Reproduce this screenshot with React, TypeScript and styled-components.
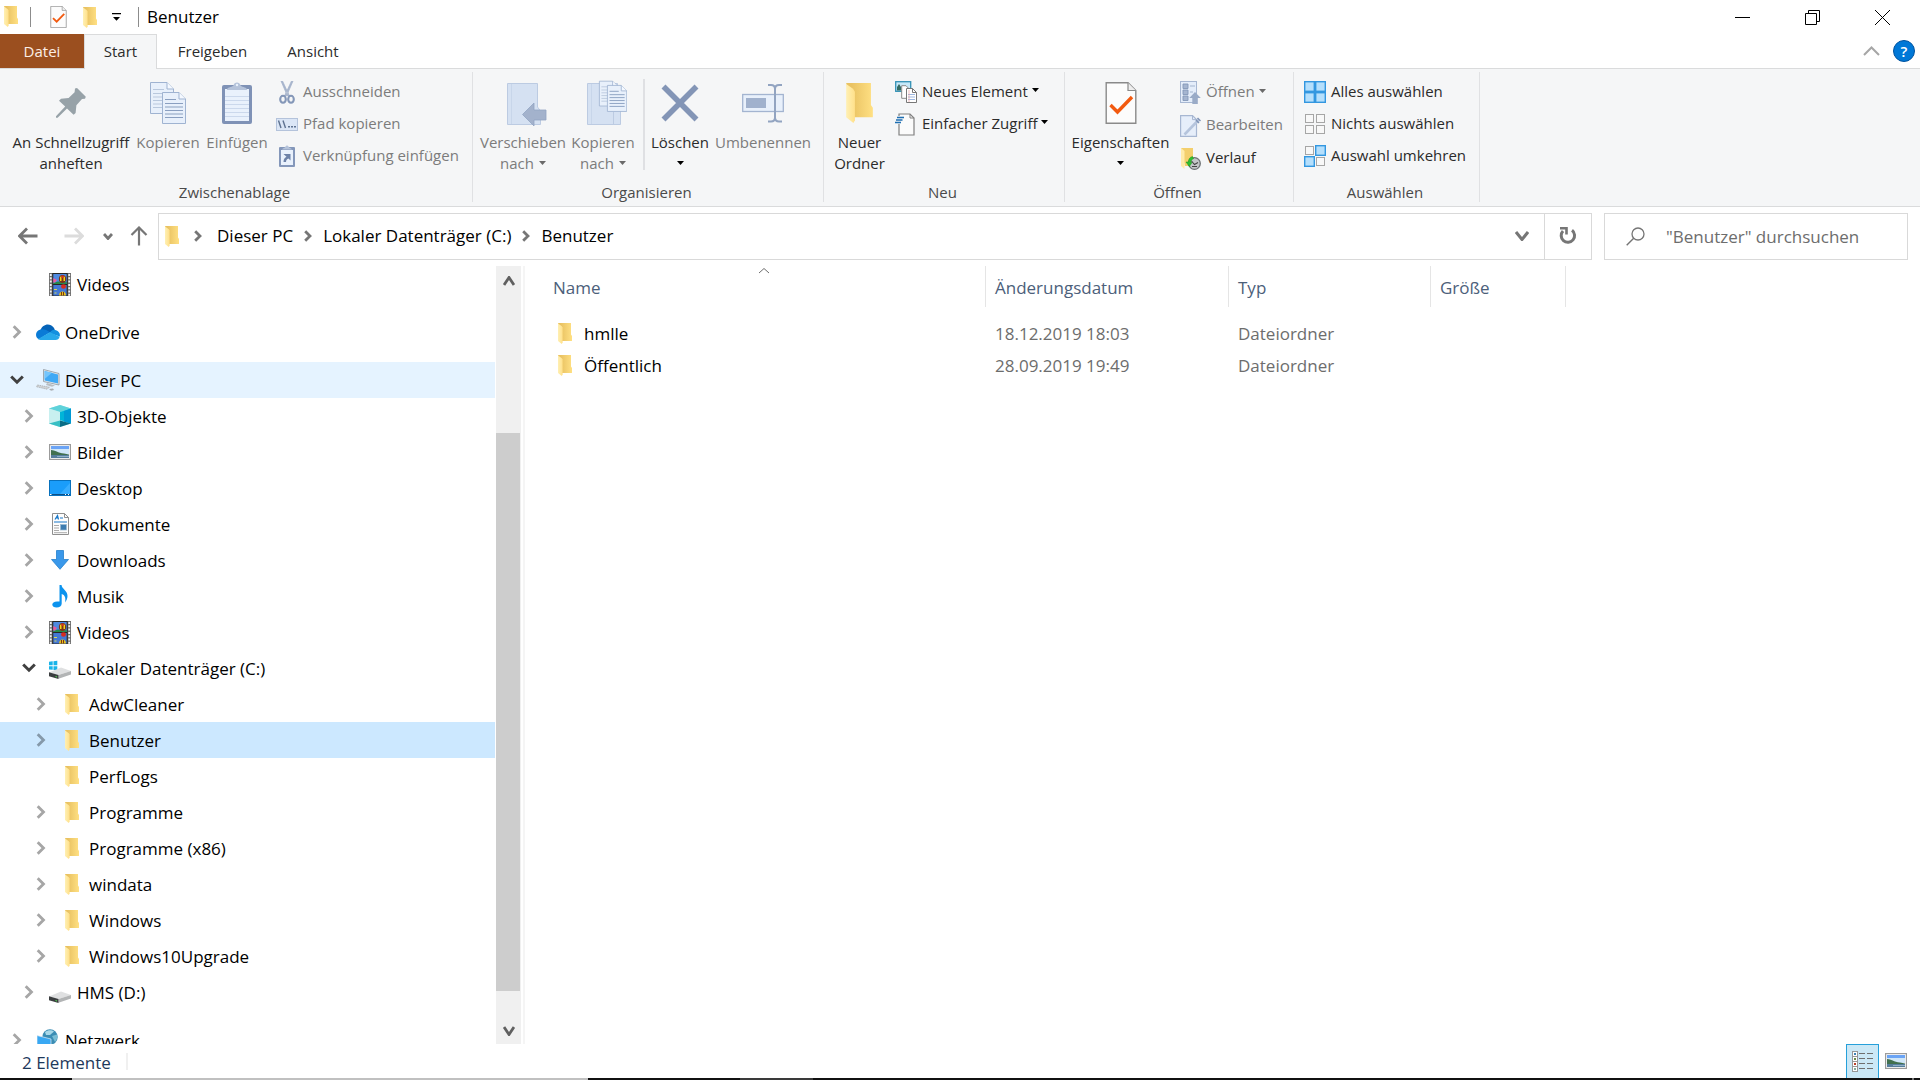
import React from 'react';
import styled, { createGlobalStyle } from 'styled-components';

const Global = createGlobalStyle`
  *, *::before, *::after { box-sizing: border-box; }
  body { margin: 0; background: #fff; }
  body, button, input, table {
    font-family: 'Open Sans', 'Noto Sans', 'Liberation Sans', sans-serif;
  }
  button { border: 0; padding: 0; margin: 0; background: none; color: inherit; font-size: inherit; line-height: inherit; }
  a { color: inherit; text-decoration: none; }
  svg { display: block; flex: none; }
`;

const Window = styled.div`
  display: flex;
  flex-direction: column;
  height: 100vh;
  color: #000;
  font-size: 17px;
  line-height: 24px;
`;

/* ---------- title bar ---------- */
const TitleBar = styled.header`
  display: flex;
  align-items: center;
  height: 34px;
  flex: none;
  padding-right: 3px;
`;
const QuickAccess = styled.div`
  display: flex;
  align-items: center;
  height: 34px;
`;
const QuickButton = styled.button<{ $w: number }>`
  display: flex;
  align-items: center;
  justify-content: center;
  width: ${(p) => p.$w}px;
  height: 34px;
`;
const SystemButton = styled(QuickButton)`
  justify-content: flex-start;
  padding: 0 0 2px 4px;
`;
const Rule = styled.span`
  width: 1px;
  height: 20px;
  background: #8c8c8c;
`;
const Title = styled.h1`
  margin: 0 0 0 8px;
  flex: 1;
  font-size: 17px;
  font-weight: 400;
  line-height: 34px;
`;
const WindowButton = styled.button`
  display: flex;
  align-items: center;
  justify-content: center;
  width: 70px;
  height: 34px;
`;

/* ---------- ribbon tabs ---------- */
const TabBar = styled.nav`
  display: flex;
  flex: none;
  height: 35px;
  border-bottom: 1px solid #dadbdc;
  font-size: 15px;
  color: #2b2b2b;
`;
const FileTab = styled.button`
  width: 84px;
  height: 34px;
  padding-bottom: 1px;
  background: #9b4f1f;
  color: #fbeee6;
`;
const Tab = styled.button<{ $w: number; $active?: boolean }>`
  width: ${(p) => p.$w}px;
  height: 35px;
  padding-bottom: 3px;
  border: 1px solid ${(p) => (p.$active ? '#dadbdc' : 'transparent')};
  border-bottom: 0;
  background: ${(p) => (p.$active ? '#f5f6f7' : 'transparent')};
`;
const TabTools = styled.div`
  display: flex;
  align-items: center;
  gap: 13px;
  margin-left: auto;
  padding-right: 5px;
`;
const HelpButton = styled.button`
  width: 22px;
  height: 22px;
  border: 1px solid #00539f;
  border-radius: 50%;
  background: #0078d7;
  color: #fff;
  font-size: 15px;
  font-weight: 600;
  line-height: 20px;
`;

/* ---------- ribbon ---------- */
const Ribbon = styled.div`
  display: flex;
  flex: none;
  height: 138px;
  padding: 3px 0 4px;
  background: #f5f6f7;
  border-bottom: 1px solid #dadbdc;
  font-size: 15px;
  line-height: 21px;
  color: #2b2b2b;
`;
const Group = styled.section<{ $w: number }>`
  display: flex;
  flex-direction: column;
  flex: none;
  width: ${(p) => p.$w}px;
  border-right: 1px solid #e0e1e3;
`;
const GroupBody = styled.div<{ $pad: number }>`
  display: flex;
  flex: 1;
  padding-left: ${(p) => p.$pad}px;
`;
const GroupName = styled.h2`
  margin: 0 0 -1px;
  padding-right: 3px;
  font-size: 15px;
  font-weight: 400;
  line-height: 21px;
  text-align: center;
  color: #4a4a4a;
`;
const BigButton = styled.button<{ $w: number }>`
  display: flex;
  flex-direction: column;
  align-items: center;
  width: ${(p) => p.$w}px;
  height: 104px;
  padding-top: 10px;
  white-space: nowrap;
  &:disabled { color: #7c7c7c; }
`;
const BigIcon = styled.span`
  display: flex;
  align-items: center;
  justify-content: center;
  height: 42px;
  margin-bottom: 8px;
`;
const Line = styled.span`
  display: flex;
  align-items: center;
  justify-content: center;
  gap: 5px;
  height: 21px;
`;
const SmallColumn = styled.div`
  display: flex;
  flex-direction: column;
  padding: 4px 0 0 4px;
`;
const SmallButton = styled.button<{ $h?: number }>`
  display: flex;
  align-items: center;
  gap: 5px;
  height: ${(p) => p.$h ?? 32}px;
  white-space: nowrap;
  &:disabled { color: #7c7c7c; }
`;
const SmallIcon = styled.span`
  display: flex;
  justify-content: center;
  width: 22px;
`;
const SmallLabel = styled.span`
  display: flex;
  align-items: center;
  gap: 4px;
  padding-bottom: 2px;
`;
const MenuMark = styled.span`
  padding-bottom: 2px;
`;
const Divider = styled.span`
  width: 2px;
  height: 91px;
  margin: 7px 5px 0 8px;
  background: #dfe0e3;
`;

/* ---------- address row ---------- */
const AddressRow = styled.div`
  display: flex;
  align-items: center;
  flex: none;
  height: 59px;
  padding: 0 12px 1px 5px;
`;
const NavButton = styled.button<{ $w: number }>`
  display: flex;
  align-items: center;
  justify-content: center;
  width: ${(p) => p.$w}px;
  height: 46px;
`;
const AddressBox = styled.div`
  display: flex;
  align-items: center;
  flex: 1;
  height: 47px;
  border: 1px solid #d9d9d9;
  padding-left: 6px;
`;
const Crumbs = styled.nav`
  display: flex;
  align-items: center;
  flex: 1;
`;
const CrumbMark = styled.span<{ $first?: boolean }>`
  display: flex;
  justify-content: center;
  width: ${(p) => (p.$first ? 38 : 30)}px;
`;
const AddressButton = styled.button<{ $w: number; $line?: boolean }>`
  display: flex;
  align-items: center;
  justify-content: center;
  width: ${(p) => p.$w}px;
  height: 45px;
  border-left: ${(p) => (p.$line ? '1px solid #d9d9d9' : '0')};
`;
const SearchBox = styled.label`
  display: flex;
  align-items: center;
  gap: 21px;
  width: 304px;
  height: 47px;
  margin-left: 12px;
  padding-left: 21px;
  border: 1px solid #d9d9d9;
`;
const SearchInput = styled.input`
  flex: 1;
  min-width: 0;
  padding: 2px 0 0;
  border: 0;
  outline: 0;
  font-size: 17px;
  line-height: 24px;
  &::placeholder { color: #6d6d6d; opacity: 1; }
`;

/* ---------- panes ---------- */
const Panes = styled.main`
  display: flex;
  flex: 1;
  min-height: 0;
`;
const Sidebar = styled.aside`
  display: flex;
  flex: none;
  width: 525px;
  border-right: 2px solid #f5f5f5;
`;
const Tree = styled.ul`
  flex: 1;
  min-width: 0;
  margin: 0;
  padding: 0;
  overflow: hidden;
  list-style: none;
`;
const TreeRow = styled.li<{ $level: number; $bg?: string; $gap?: boolean }>`
  display: flex;
  align-items: center;
  height: 36px;
  margin-top: ${(p) => (p.$gap ? 12 : 0)}px;
  padding-left: ${(p) => p.$level * 12}px;
  background: ${(p) => p.$bg ?? 'transparent'};
`;
const Toggle = styled.button`
  display: flex;
  align-items: center;
  justify-content: center;
  width: 34px;
  height: 36px;
`;
const ToggleGap = styled.span`
  width: 34px;
`;
const TreeLink = styled.a`
  display: flex;
  align-items: center;
  gap: 3px;
  white-space: nowrap;
`;
const TreeIcon = styled.span`
  display: flex;
  justify-content: center;
  width: 28px;
`;
const ItemName = styled.span`
  padding-top: 2px;
`;
const ScrollBar = styled.div`
  display: flex;
  flex-direction: column;
  width: 25px;
  margin: 0 2px 0 1px;
  background: #f0f0f0;
`;
const ScrollArrow = styled.button<{ $h: number }>`
  display: flex;
  align-items: center;
  justify-content: center;
  height: ${(p) => p.$h}px;
`;
const Track = styled.div<{ $part: number }>`
  flex: ${(p) => p.$part} 0 0;
`;
const Thumb = styled.div`
  flex: 558 0 0;
  margin-right: 1px;
  background: #cdcdcd;
`;

/* ---------- file list ---------- */
const Files = styled.section`
  flex: 1;
  min-width: 0;
`;
const FileTable = styled.table`
  width: 1041px;
  table-layout: fixed;
  border-collapse: separate;
  border-spacing: 0;
  color: #6d6d6d;
  tbody::before { content: ''; display: block; height: 10px; }
`;
const Head = styled.th<{ $w: number; $pad: number }>`
  position: relative;
  width: ${(p) => p.$w}px;
  height: 41px;
  padding: 2px 0 0 ${(p) => p.$pad}px;
  border-right: 1px solid #e5e5e5;
  text-align: left;
  font-weight: 400;
  color: #4c607a;
`;
const SortMark = styled.span`
  position: absolute;
  top: 1px;
  left: 233px;
`;
const Cell = styled.td`
  height: 32px;
  padding: 2px 0 0 9px;
`;
const NameCell = styled(Cell)`
  padding: 0 0 0 33px;
  color: #000;
`;
const FileLink = styled.a`
  display: flex;
  align-items: center;
  gap: 12px;
`;

/* ---------- status ---------- */
const StatusBar = styled.footer`
  display: flex;
  align-items: center;
  flex: none;
  height: 34px;
  color: #1e395b;
`;
const StatusText = styled.span`
  padding: 4px 15px 0 22px;
`;
const StatusRule = styled.span`
  width: 2px;
  height: 17px;
  margin-right: auto;
  background: #f0f0f0;
`;
const ViewButton = styled.button<{ $on?: boolean }>`
  display: flex;
  align-items: center;
  justify-content: center;
  width: 33px;
  height: 34px;
  border: ${(p) => (p.$on ? '1px solid #26a0da' : '0')};
  border-bottom: 0;
  background: ${(p) => (p.$on ? '#cbe8f6' : 'transparent')};
`;
const ViewButtons = styled.div`
  display: flex;
  padding-right: 8px;
`;
const TaskEdge = styled.div`
  display: flex;
  flex: none;
  height: 2px;
  background: #111;
`;
const EdgePart = styled.span<{ $w: number; $c: string }>`
  width: ${(p) => p.$w}px;
  background: ${(p) => p.$c};
`;
const EdgeEnd = styled(EdgePart)`
  margin: 0 6px 0 auto;
`;

/* ---------- icons ---------- */
const Folder = ({ w = 14, h = 21 }: { w?: number; h?: number }) => (
  <svg width={w} height={h} viewBox="0 0 14 21">
    <defs>
      <linearGradient id="fb" x1="0" x2="1">
        <stop offset="0.2" stopColor="#e9c262" />
        <stop offset="1" stopColor="#ffe083" />
      </linearGradient>
      <linearGradient id="ff" x1="0" x2="1">
        <stop offset="0" stopColor="#fff0b4" />
        <stop offset="1" stopColor="#ffe08a" />
      </linearGradient>
    </defs>
    <path d="M0 0H13V11.5L14 13V18H4Z" fill="url(#fb)" />
    <path d="M0 0.5L3.6 3L4.6 4.6V19.5L3.8 21L0 18Z" fill="url(#ff)" />
  </svg>
);

const Chevron = ({ open, color = '#a6a6a6' }: { open?: boolean; color?: string }) =>
  open ? (
    <svg width="14" height="10" viewBox="0 0 14 10">
      <path d="M1.2 1.5L7 7.2L12.8 1.5" fill="none" stroke={color} strokeWidth="3" />
    </svg>
  ) : (
    <svg width="10" height="14" viewBox="0 0 10 14">
      <path d="M1.7 1.2L7.5 7L1.7 12.8" fill="none" stroke={color} strokeWidth="2.8" />
    </svg>
  );

const CrumbChevron = () => (
  <svg width="8" height="12" viewBox="0 0 8 12">
    <path d="M1.2 1.2L6 6L1.2 10.8" fill="none" stroke="#767676" strokeWidth="2.8" />
  </svg>
);

const Caret = ({ color = '#000' }: { color?: string }) => (
  <svg width="7" height="4" viewBox="0 0 7 4">
    <path d="M0 0H7L3.5 4Z" fill={color} />
  </svg>
);

const CheckPage = ({ w, h }: { w: number; h: number }) => (
  <svg width={w} height={h} viewBox="0 0 31 42">
    <path d="M0.7 0.7H22.5L30.3 8.5V41.3H0.7Z" fill="#fcfcfc" stroke="#8a8a8a" strokeWidth="1.4" />
    <path d="M22.5 0.7V8.5H30.3" fill="#eee" stroke="#8a8a8a" strokeWidth="1.2" />
    <path d="M5 23L12 30L26.5 15" fill="none" stroke="#f25a10" strokeWidth="3.4" />
  </svg>
);

const Pin = () => (
  <svg width="30" height="30" viewBox="0 0 30 30">
    <path
      d="M19 0.6L21 0L29.8 8.8L29 10.8L26 11L20.4 17.2L19.6 25L17.6 26.8L11 20.4L1.6 29.8H0V28.2L9.2 18.6L3 12.8L5 10.8L12.6 10L18.6 4.2Z"
      fill="#97a2a8"
    />
  </svg>
);

const PageLines = ({ x, y, light }: { x: number; y: number; light?: boolean }) => {
  const c = light ? '#b9c8dd' : '#8a9fc0';
  return (
    <g transform={`translate(${x} ${y})`}>
      <path d="M0.5 0.5H17L23.5 7V31.5H0.5Z" fill="#e8f0fb" stroke="#9fb3d1" />
      <path d="M17 0.5V7H23.5" fill="#f5f9ff" stroke="#9fb3d1" />
      <path d="M3 7.5H14M3 11.5H21M3 15H21M3 18.5H21M3 22H21M3 25.5H21" stroke={c} strokeWidth="1.1" />
    </g>
  );
};

const CopyIcon = () => (
  <svg width="36" height="42" viewBox="0 0 36 42">
    <PageLines x={0} y={0} light />
    <PageLines x={12} y={10} />
  </svg>
);

const PasteIcon = () => (
  <svg width="30" height="42" viewBox="0 0 30 42">
    <rect x="0" y="3" width="30" height="39" rx="2" fill="#7f92b6" />
    <rect x="3" y="7" width="24" height="32" fill="#e9f1fc" />
    <path d="M3 14.5H27M3 18.5H27M3 22.5H27M3 26.5H27M3 30.5H27M3 34.5H27" stroke="#cbd8ec" />
    <path d="M5 8C5 5 9 5.500 11.500 3.500C12 -0.500 18 -0.500 18.500 3.500C21 5.500 25 5 25 8Z" fill="#b5c3da" />
    <circle cx="15" cy="3" r="1.2" fill="#e9f1fc" />
  </svg>
);

const CutIcon = () => (
  <svg width="16" height="23" viewBox="0 0 16 23">
    <path d="M2 0L3.500 0L10.500 15L8.500 15Z M14 0L12.500 0L5.500 15L7.500 15Z" fill="#a6b4cc" stroke="#a6b4cc" strokeWidth="0.8" />
    <ellipse cx="4" cy="18.300" rx="2.8" ry="3.500" fill="none" stroke="#8497b8" strokeWidth="2.1" />
    <ellipse cx="12" cy="18.300" rx="2.8" ry="3.500" fill="none" stroke="#8497b8" strokeWidth="2.1" />
  </svg>
);

const PathIcon = () => (
  <svg width="22" height="13" viewBox="0 0 22 13">
    <rect x="0.5" y="0.5" width="21" height="12" fill="#dbe6f6" stroke="#b4c3db" />
    <path d="M2.500 2.500L5 10M7 2.500L9.500 10" stroke="#5f7391" strokeWidth="1.4" />
    <path d="M12 8.700H14M15 8.700H17M18 8.700H20" stroke="#5f7391" strokeWidth="1.5" />
  </svg>
);

const LinkPasteIcon = () => (
  <svg width="16" height="22" viewBox="0 0 16 22">
    <rect y="2" width="16" height="20" rx="1" fill="#8497ba" />
    <rect x="2" y="5" width="12" height="15" fill="#e9f1fc" />
    <path d="M3 4.500C4 3 6 3 6.500 1.500C7 0 9 0 9.500 1.500C10 3 12 3 13 4.500Z" fill="#b5c3da" />
    <path d="M4.500 9H11.500V15.500L9.500 13.500C8 14 7 15 7 17H4.500C4.500 14 6 12.500 7.500 11.800Z" fill="#6d82a8" />
  </svg>
);

const SheetBack = ({ w }: { w: number }) => (
  <>
    <path d={`M0.5 3.5H${w - 3.5}V27L${w - 0.5} 31V44.500H0.5Z`} fill="#d5e1f2" stroke="#bccbe2" />
    <path d="M4.500 4V44" stroke="#c8d6ea" />
  </>
);

const MoveIcon = () => (
  <svg width="40" height="46" viewBox="0 0 40 46">
    <SheetBack w={34} />
    <path d="M15.500 34.500L27 23V30H39V40H27V46Z" fill="#a3b2cc" stroke="#92a4c3" strokeWidth="0.8" />
  </svg>
);

const CopyToIcon = () => (
  <svg width="40" height="46" viewBox="0 0 40 46">
    <SheetBack w={34} />
    <path d="M26.500 32V44" stroke="#bccbe2" />
    <g transform="translate(12 0) scale(.8)">
      <PageLines x={0} y={1} light />
    </g>
    <g transform="translate(20 5) scale(.84)">
      <PageLines x={0} y={0} />
    </g>
  </svg>
);

const DeleteIcon = () => (
  <svg width="38" height="38" viewBox="0 0 38 38">
    <path d="M2.500 2.500L35.500 35.500M35.500 2.500L2.500 35.500" stroke="#8395b6" strokeWidth="5.600" />
  </svg>
);

const RenameIcon = () => (
  <svg width="42" height="40" viewBox="0 0 42 40">
    <rect x="0.700" y="11.500" width="40.600" height="17" fill="#e8f0fb" stroke="#a3b4d0" strokeWidth="1.300" />
    <rect x="4" y="15" width="20" height="10" fill="#a0b1cd" />
    <path d="M26 2H29C31.500 2 33 3.500 33 6C33 3.500 34.500 2 37 2H40M33 5V35M26 38.500H29C31.500 38.500 33 37 33 34.500C33 37 34.500 38.500 37 38.500H40" fill="none" stroke="#92a4c1" strokeWidth="2" />
  </svg>
);

const NewItemIcon = () => (
  <svg width="22" height="22" viewBox="0 0 22 22">
    <rect x="0.700" y="0.700" width="15" height="9.600" fill="#c6e8f8" stroke="#3391b5" strokeWidth="1.300" />
    <path d="M2 9.500V6L4 3L6 6V9.500Z" fill="#356b62" />
    <path d="M6.700 4.700H11L13.300 7V17.300H6.700Z" fill="#fff" stroke="#8a8a8a" />
    <path d="M11.500 7.500H17.500L21.500 11.500V21.500H11.500Z" fill="#fff" stroke="#777" />
    <path d="M17.500 7.500V11.500H21.500" fill="none" stroke="#777" />
    <path d="M13 13.500H20M13 16H20M13 18.500H20" stroke="#9cb7e0" />
    <path d="M14 9V21" stroke="#e9a0a0" strokeWidth="0.700" />
  </svg>
);

const EasyAccessIcon = () => (
  <svg width="22" height="23" viewBox="0 0 22 23">
    <path d="M4 1H15L19 5V22H4Z" fill="#fbfbfb" stroke="#808080" strokeWidth="1.200" />
    <path d="M15 1V5H19" fill="none" stroke="#808080" />
    <path d="M2 4.500H9M1 7H7.500M0 9.500H6" stroke="#f5f6f7" strokeWidth="3" />
    <path d="M2 4.500H9M1 7H7.500M0 9.500H6" stroke="#1f6fb2" strokeWidth="1.300" />
  </svg>
);

const OpenIcon = () => (
  <svg width="21" height="23" viewBox="0 0 21 23">
    <rect x="0.500" y="0.500" width="16" height="21" fill="#e4edfa" stroke="#a7b7d2" />
    <path d="M3 3H8V7.500H3ZM3 9H8V13.500H3ZM3 15H8V19.500H3Z" fill="#a5b5d0" stroke="#8497b8" strokeWidth="0.900" />
    <path d="M10 5H15M10 11H13" stroke="#b9c7dd" strokeWidth="1.300" />
    <path d="M15 11L20.800 17H17.800V23H12.300V17H9.300Z" fill="#9aabc7" />
  </svg>
);

const EditIcon = () => (
  <svg width="21" height="22" viewBox="0 0 21 22">
    <path d="M0.600 0.600H12.500L16.500 4.600V21.400H0.600Z" fill="#e6eefa" stroke="#a7b7d2" strokeWidth="1.200" />
    <path d="M12.500 0.600V4.600H16.500" fill="none" stroke="#a7b7d2" />
    <path d="M4.500 19.500L18.500 5" stroke="#b5c4dc" strokeWidth="2.600" />
    <path d="M16 5L19 8M17.500 3L20.500 6" stroke="#7f93b6" strokeWidth="1.500" />
  </svg>
);

const HistoryIcon = () => (
  <svg width="21" height="22" viewBox="0 0 21 22">
    <path d="M1 0H13V18H5Z" fill="#f3cf6d" />
    <path d="M1 0L4.500 3V21L1 18Z" fill="#ffebaa" />
    <circle cx="14.500" cy="15.500" r="5.800" fill="#c3c6c8" stroke="#6d7275" strokeWidth="1.300" />
    <path d="M11.500 13L14.500 16.500L18 14.500M12 18.500H17" fill="none" stroke="#444" strokeWidth="1.100" />
    <path d="M12.500 8.500C10 9 8.500 11 8.300 14H6L9.300 18.500L12 14.500H10.500C11 12.500 12 11.300 13.500 10.700Z" fill="#2fbf2f" stroke="#16911b" strokeWidth="0.500" />
  </svg>
);

type Tile = [number, number, boolean];
const Tiles = ({ on }: { on: boolean[] }) => {
  const tiles: Tile[] = [
    [0, 0, on[0]],
    [11, 0, on[1]],
    [0, 11, on[2]],
    [11, 11, on[3]],
  ];
  return (
    <svg width="22" height="22" viewBox="0 0 22 22">
      {tiles
        .slice()
        .sort((a, b) => Number(a[2]) - Number(b[2]))
        .map(([x, y, lit]) =>
          lit ? (
            <rect key={`${x}-${y}`} x={x + 0.7} y={y + 0.7} width="9.600" height="9.600" fill="#b5dffc" stroke="#3397e0" strokeWidth="1.400" />
          ) : (
            <rect key={`${x}-${y}`} x={x + 1.5} y={y + 1.5} width="8" height="8" fill="#f8f8f8" stroke="#a6a6a6" />
          ),
        )}
    </svg>
  );
};

const VideoIcon = () => (
  <svg width="22" height="23" viewBox="0 0 22 23">
    <rect width="22" height="23" fill="#6e6e6e" />
    <path d="M1.800 1V23M20.200 1V23" stroke="#f2f2f2" strokeWidth="1.800" strokeDasharray="2 1.300" />
    <rect x="3.300" width="15.400" height="23" fill="#262626" />
    <rect x="4.300" y="1" width="13.400" height="10" fill="#4f8ae0" />
    <rect x="4.300" y="12" width="13.400" height="10.500" fill="#4478d4" />
    <path d="M4.300 10L9 8.500L13 9.500L17.700 9V11H4.300Z" fill="#268a4a" />
    <path d="M4.300 5L8 7L6 9.500H4.300Z" fill="#ee5a9a" />
    <ellipse cx="13.500" cy="6" rx="3.600" ry="4" fill="#7d3415" />
    <path d="M11 4L12.500 3V8H11ZM14.500 3L16 4V8H14.500Z" fill="#f2d21c" />
    <path d="M12.500 2.500H14.500V5H12.500Z" fill="#d62c20" />
    <ellipse cx="14.500" cy="13.500" rx="2.500" ry="2.300" fill="#d62c20" />
    <path d="M10 22.500C10 17 17 17 17 22.500Z" fill="#e8c21a" />
    <path d="M12.500 22.500V19M14.500 22.500V19" stroke="#7d3415" />
    <path d="M5 16.500H8M5.500 20H7.500" stroke="#d9d957" />
  </svg>
);

const OneDriveIcon = () => (
  <svg width="24" height="16" viewBox="0 0 24 16">
    <path d="M4.500 6C6 1.500 11 -1 15 1.200C17 2.300 18.300 3.800 18.800 6L12 9.500Z" fill="#0563b8" />
    <path d="M4.500 5.500C8 4.500 10 5.700 14 8.300L3 15.300C-1.500 13.500 -0.800 6.500 4.500 5.500Z" fill="#0a7bd6" />
    <path d="M14 8.300C16 5.500 18.500 5.300 20 6.200C23 7 24.500 10 23.700 12.500L13 9Z" fill="#1490df" />
    <path d="M14 8.200L23.600 12.700C23 15 21.500 16 19.500 16H5.500C4 16 3 15.600 2 14.900Z" fill="#28a8ea" />
  </svg>
);

const PcIcon = () => (
  <svg width="24" height="22" viewBox="0 0 24 22">
    <path d="M7.500 0.500L23 4.500V16L7.500 12.500Z" fill="#e8eaec" stroke="#8d969c" strokeWidth="0.800" />
    <path d="M8.600 1.900L22 5.400V14.500L8.600 11.500Z" fill="#3fa9f5" />
    <path d="M8.600 1.900L16 3.800L8.600 10Z" fill="#74c5fb" />
    <path d="M11 14L19 16.500L16 17.800L10 16Z" fill="#b9bec2" />
    <path d="M1.500 16L13.500 18.200L11 20.200L0 17.600Z" fill="#d0d3d6" stroke="#a1a5a8" strokeWidth="0.700" strokeDasharray="1.500 0.700" />
    <path d="M13 20L17 19.500L18 21L15 21.700Z" fill="#a8acb0" />
  </svg>
);

const CubeIcon = () => (
  <svg width="22" height="22" viewBox="0 0 22 22">
    <path d="M0 3.500L11 0L22 3.500V18.500L11 22L0 18.500Z" fill="#9de4e8" />
    <path d="M0 3.500L11 0L22 3.500L11 7Z" fill="#5fd2da" />
    <path d="M0 3.500L11 7V17L0 18.500Z" fill="#c8f0f0" />
    <path d="M11 7L22 3.500V18.500L11 15Z" fill="#00b4d8" />
    <path d="M15 6L22 3.500V18.500L15 16.500Z" fill="#0099d4" />
    <path d="M0 18.500L11 15.500V22Z" fill="#38bfc4" />
    <path d="M22 18.500L11 15.500V22Z" fill="#0b6d86" />
  </svg>
);

const PictureIcon = () => (
  <svg width="22" height="16" viewBox="0 0 22 16">
    <rect x="0.600" y="0.600" width="20.800" height="14.800" fill="#fff" stroke="#9b9b9b" strokeWidth="1.200" />
    <rect x="2" y="2" width="18" height="4" fill="#6ba4f5" />
    <rect x="2" y="5" width="18" height="5" fill="#cfe6f8" />
    <path d="M2 6C6 6 9 9 15 9.500L20 10.500V11H2Z" fill="#41704f" />
    <rect x="2" y="11" width="18" height="3" fill="#557d9c" />
    <path d="M8 12.500H20" stroke="#8fb0c6" />
  </svg>
);

const DesktopIcon = () => (
  <svg width="22" height="16" viewBox="0 0 22 16">
    <rect x="0.500" y="0.500" width="21" height="15" fill="#1a9dfa" stroke="#0871bd" />
    <path d="M11 14L21 3V14Z" fill="#38adff" />
    <path d="M1 14.500H21" stroke="#0d4f86" />
    <path d="M1 14.500H2.500M16 14.500H17M19 14.500H20" stroke="#fff" />
  </svg>
);

const DocIcon = () => (
  <svg width="17" height="22" viewBox="0 0 17 22">
    <path d="M0.500 0.500H12.500L16.500 4.500V21.500H0.500Z" fill="#fdfdfd" stroke="#8f8f8f" />
    <path d="M12.500 0.500V4.500H16.500" fill="none" stroke="#8f8f8f" />
    <path d="M3 6.500L5.500 2.500L6.500 6.500M4.300 5H6M8 5H11M2 9H15" fill="none" stroke="#1979ca" strokeWidth="1.200" />
    <path d="M2 12.500H7M2 15H7M2 17.500H7M2 19.700H15" stroke="#aaa" />
    <rect x="8.500" y="11.500" width="6" height="5.500" fill="#3d7cb0" stroke="#9bb9d0" strokeWidth="0.700" />
  </svg>
);

const DownIcon = () => (
  <svg width="18" height="20" viewBox="0 0 18 20">
    <path d="M5.500 0.500H12.500V9.500H17.500L9 19.300L0.500 9.500H5.500Z" fill="#3a98ea" stroke="#2380cd" strokeWidth="0.800" />
  </svg>
);

const MusicIcon = () => (
  <svg width="16" height="23" viewBox="0 0 16 23">
    <path d="M7.500 0H9.500C10 4 15.500 5.500 15.500 11C15.500 13.500 14.500 15.500 13 17.500C14 13 13 10 9.700 9V18.500C9.700 21 7.500 22.600 4.600 22.600C2 22.600 0.300 21.300 0.300 19.500C0.300 17.300 2.800 15.800 7.500 16.600Z" fill="#0c93ee" />
  </svg>
);

const DriveIcon = ({ windows }: { windows?: boolean }) => (
  <svg width="22" height="26" viewBox="0 -2 22 26">
    {windows && <path d="M0 4.800L3.700 4.300V8.300H0ZM4.500 4.200L8.300 3.700V8.300H4.500ZM0 9.200H3.700V12.800L0 12.400ZM4.500 9.200H8.300V13.400L4.500 13Z" fill="#18b4e9" />}
    <path d="M0 15.500L12 10.500L22 14L9.500 18Z" fill="#dfe0e1" />
    <path d="M9.500 18L22 14V17.500L9.500 21.800Z" fill="#b2b4b5" />
    <path d="M0 15.300L9.500 18V21.900L0 19.300Z" fill="#3a3d3f" />
    <path d="M6.500 19.500L8 20" stroke="#55d355" strokeWidth="1.200" />
  </svg>
);

const NetworkIcon = () => (
  <svg width="22" height="22" viewBox="0 0 22 22">
    <circle cx="13" cy="8" r="7.700" fill="#3b8db4" />
    <path d="M8 3C11 0.500 15 0.800 17 2.500L13 6L9 6Z" fill="#a8d8e8" />
    <path d="M15 7L20 5.500C21 8 20 11 18 13Z" fill="#79bdd4" />
    <path d="M0 6.500L14 10V20L0 17.500Z" fill="#39a8f3" stroke="#e2edf3" strokeWidth="0.700" />
  </svg>
);

const DetailsIcon = () => (
  <svg width="21" height="21" viewBox="0 0 21 21">
    {[0, 5, 10, 15].map((y, i) => (
      <g key={y}>
        <rect x="0.500" y={y + 0.5} width="5" height="5" fill="#fff" stroke="#979797" />
        <rect x="2" y={y + 2} width="2" height="2" fill={['#3b83b5', '#6c8d4b', '#b8402a', '#7fae9c'][i]} />
        <path d={`M7 ${y + 2.5}H13M15 ${y + 2.5}H21`} stroke="#6f6f6f" />
      </g>
    ))}
  </svg>
);

const ArrowIcon = ({ dir, color }: { dir: 'left' | 'right' | 'up'; color: string }) => {
  const turn = { left: 0, right: 180, up: 90 }[dir];
  return (
    <svg width="20" height="20" viewBox="0 0 20 20">
      <path d="M19.500 10H2M9 2.500L1.500 10L9 17.500" transform={`rotate(${turn} 10 10)`} fill="none" stroke={color} strokeWidth={dir === 'up' ? 2.2 : 2.8} />
    </svg>
  );
};

const ThinChevron = ({ up, w, h, color, sw }: { up?: boolean; w: number; h: number; color: string; sw: number }) => (
  <svg width={w} height={h} viewBox={`0 0 ${w} ${h}`}>
    <path d={up ? `M1 ${h - 1}L${w / 2} 1.500L${w - 1} ${h - 1}` : `M1 1L${w / 2} ${h - 1.5}L${w - 1} 1`} fill="none" stroke={color} strokeWidth={sw} />
  </svg>
);

/* ---------- data ---------- */
type Node = { name: string; level: number; icon: React.ReactNode; state?: 'open' | 'closed'; gap?: boolean; bg?: string };
const tree: Node[] = [
  { name: 'Videos', level: 1, icon: <VideoIcon /> },
  { name: 'OneDrive', level: 0, icon: <OneDriveIcon />, state: 'closed', gap: true },
  { name: 'Dieser PC', level: 0, icon: <PcIcon />, state: 'open', gap: true, bg: '#e5f3ff' },
  { name: '3D-Objekte', level: 1, icon: <CubeIcon />, state: 'closed' },
  { name: 'Bilder', level: 1, icon: <PictureIcon />, state: 'closed' },
  { name: 'Desktop', level: 1, icon: <DesktopIcon />, state: 'closed' },
  { name: 'Dokumente', level: 1, icon: <DocIcon />, state: 'closed' },
  { name: 'Downloads', level: 1, icon: <DownIcon />, state: 'closed' },
  { name: 'Musik', level: 1, icon: <MusicIcon />, state: 'closed' },
  { name: 'Videos', level: 1, icon: <VideoIcon />, state: 'closed' },
  { name: 'Lokaler Datenträger (C:)', level: 1, icon: <DriveIcon windows />, state: 'open' },
  { name: 'AdwCleaner', level: 2, icon: <Folder />, state: 'closed' },
  { name: 'Benutzer', level: 2, icon: <Folder />, state: 'closed', bg: '#cce8ff' },
  { name: 'PerfLogs', level: 2, icon: <Folder /> },
  { name: 'Programme', level: 2, icon: <Folder />, state: 'closed' },
  { name: 'Programme (x86)', level: 2, icon: <Folder />, state: 'closed' },
  { name: 'windata', level: 2, icon: <Folder />, state: 'closed' },
  { name: 'Windows', level: 2, icon: <Folder />, state: 'closed' },
  { name: 'Windows10Upgrade', level: 2, icon: <Folder />, state: 'closed' },
  { name: 'HMS (D:)', level: 1, icon: <DriveIcon />, state: 'closed' },
  { name: 'Netzwerk', level: 0, icon: <NetworkIcon />, state: 'closed', gap: true },
];

const files = [
  { name: 'hmlle', date: '18.12.2019 18:03', type: 'Dateiordner' },
  { name: 'Öffentlich', date: '28.09.2019 19:49', type: 'Dateiordner' },
];

const crumbs = ['Dieser PC', 'Lokaler Datenträger (C:)', 'Benutzer'];

type BigProps = { w: number; icon: React.ReactNode; text: string; second?: string; menu?: boolean; off?: boolean };
const Big = ({ w, icon, text, second, menu, off }: BigProps) => (
  <BigButton $w={w} disabled={off}>
    <BigIcon>{icon}</BigIcon>
    <Line>{text}</Line>
    {(second || menu) && (
      <Line>
        {second}
        {menu && <MenuMark><Caret color={off ? '#6a6a6a' : '#000'} /></MenuMark>}
      </Line>
    )}
  </BigButton>
);

type SmallProps = { icon: React.ReactNode; text: string; menu?: boolean; off?: boolean; h?: number };
const Small = ({ icon, text, menu, off, h }: SmallProps) => (
  <SmallButton disabled={off} $h={h}>
    <SmallIcon>{icon}</SmallIcon>
    <SmallLabel>
      {text}
      {menu && <MenuMark><Caret color={off ? '#6a6a6a' : '#000'} /></MenuMark>}
    </SmallLabel>
  </SmallButton>
);

const RibbonGroup = ({ name, w, pad, children }: { name: string; w: number; pad: number; children: React.ReactNode }) => (
  <Group $w={w}>
    <GroupBody $pad={pad}>{children}</GroupBody>
    <GroupName>{name}</GroupName>
  </Group>
);

export default function App() {
  return (
    <>
      <Global />
      <Window>
        <TitleBar>
          <QuickAccess>
            <SystemButton $w={30} aria-label="Systemmenü"><Folder /></SystemButton>
            <Rule />
            <QuickButton $w={55} aria-label="Eigenschaften"><CheckPage w={17} h={22} /></QuickButton>
            <QuickButton $w={8} aria-label="Neuer Ordner"><Folder /></QuickButton>
            <QuickButton $w={44} aria-label="Symbolleiste anpassen">
              <svg width="9" height="8" viewBox="0 0 9 8">
                <path d="M0 0H9V1.200H0ZM1 4H8L4.500 7.800Z" fill="#000" />
              </svg>
            </QuickButton>
            <Rule />
          </QuickAccess>
          <Title>Benutzer</Title>
          <WindowButton aria-label="Minimieren">
            <svg width="15" height="15" viewBox="0 0 15 15"><path d="M0 7.500H15" stroke="#000" /></svg>
          </WindowButton>
          <WindowButton aria-label="Verkleinern">
            <svg width="15" height="15" viewBox="0 0 15 15">
              <path d="M0.500 3.500H11.500V14.500H0.500ZM3.500 3.500V0.500H14.500V11.500H11.500" fill="none" stroke="#000" />
            </svg>
          </WindowButton>
          <WindowButton aria-label="Schließen">
            <svg width="15" height="15" viewBox="0 0 15 15"><path d="M0 0L15 15M15 0L0 15" stroke="#000" /></svg>
          </WindowButton>
        </TitleBar>

        <TabBar>
          <FileTab>Datei</FileTab>
          <Tab $w={73} $active>Start</Tab>
          <Tab $w={111}>Freigeben</Tab>
          <Tab $w={90}>Ansicht</Tab>
          <TabTools>
            <button aria-label="Menüband minimieren"><ThinChevron up w={17} h={10} color="#a6a6a6" sw={2} /></button>
            <HelpButton aria-label="Hilfe">?</HelpButton>
          </TabTools>
        </TabBar>

        <Ribbon>
          <RibbonGroup name="Zwischenablage" w={473} pad={8}>
            <Big w={126} icon={<Pin />} text="An Schnellzugriff" second="anheften" />
            <Big w={68} icon={<CopyIcon />} text="Kopieren" off />
            <Big w={70} icon={<PasteIcon />} text="Einfügen" off />
            <SmallColumn>
              <Small icon={<CutIcon />} text="Ausschneiden" off />
              <Small icon={<PathIcon />} text="Pfad kopieren" off />
              <Small icon={<LinkPasteIcon />} text="Verknüpfung einfügen" off />
            </SmallColumn>
          </RibbonGroup>
          <RibbonGroup name="Organisieren" w={351} pad={2}>
            <Big
              w={96}
              icon={<svg width="48" height="46" viewBox="-8 0 48 46"><MoveIcon /></svg>}
              text="Verschieben"
              second="nach"
              menu
              off
            />
            <Big
              w={64}
              icon={<svg width="48" height="46" viewBox="-8 0 48 46"><CopyToIcon /></svg>}
              text="Kopieren"
              second="nach"
              menu
              off
            />
            <Divider />
            <Big w={60} icon={<DeleteIcon />} text="Löschen" menu />
            <Big w={106} icon={<RenameIcon />} text="Umbenennen" off />
          </RibbonGroup>
          <RibbonGroup name="Neu" w={241} pad={4}>
            <Big w={63} icon={<Folder w={27} h={40} />} text="Neuer" second="Ordner" />
            <SmallColumn>
              <Small icon={<NewItemIcon />} text="Neues Element" menu />
              <Small icon={<EasyAccessIcon />} text="Einfacher Zugriff" menu />
            </SmallColumn>
          </RibbonGroup>
          <RibbonGroup name="Öffnen" w={229} pad={1}>
            <Big w={109} icon={<CheckPage w={32} h={42} />} text="Eigenschaften" menu />
            <SmallColumn>
              <Small h={33} icon={<OpenIcon />} text="Öffnen" menu off />
              <Small h={33} icon={<EditIcon />} text="Bearbeiten" off />
              <Small h={33} icon={<HistoryIcon />} text="Verlauf" />
            </SmallColumn>
          </RibbonGroup>
          <RibbonGroup name="Auswählen" w={186} pad={6}>
            <SmallColumn>
              <Small icon={<Tiles on={[true, true, true, true]} />} text="Alles auswählen" />
              <Small icon={<Tiles on={[false, false, false, false]} />} text="Nichts auswählen" />
              <Small icon={<Tiles on={[false, true, true, false]} />} text="Auswahl umkehren" />
            </SmallColumn>
          </RibbonGroup>
        </Ribbon>

        <AddressRow>
          <NavButton $w={46} aria-label="Zurück"><ArrowIcon dir="left" color="#767676" /></NavButton>
          <NavButton $w={46} aria-label="Vorwärts"><ArrowIcon dir="right" color="#dcdcdc" /></NavButton>
          <NavButton $w={22} aria-label="Zuletzt besuchte Orte"><ThinChevron w={10} h={7} color="#767676" sw={2.8} /></NavButton>
          <NavButton $w={39} aria-label="Nach oben"><ArrowIcon dir="up" color="#767676" /></NavButton>
          <AddressBox>
            <Folder />
            <Crumbs aria-label="Pfad">
              {crumbs.map((c, i) => (
                <React.Fragment key={c}>
                  <CrumbMark $first={i === 0}><CrumbChevron /></CrumbMark>
                  <a href="#">{c}</a>
                </React.Fragment>
              ))}
            </Crumbs>
            <AddressButton $w={44} aria-label="Vorherige Orte"><ThinChevron w={14} h={10} color="#767676" sw={3} /></AddressButton>
            <AddressButton $w={47} $line aria-label="Aktualisieren">
              <svg width="18" height="18" viewBox="0 0 18 18">
                <path d="M13 3.300A6.700 6.700 0 1 1 4 4" fill="none" stroke="#767676" strokeWidth="3" />
                <path d="M1 1.300H7.500V7.500" fill="none" stroke="#767676" strokeWidth="2.600" />
              </svg>
            </AddressButton>
          </AddressBox>
          <SearchBox>
            <svg width="19" height="19" viewBox="0 0 19 19">
              <circle cx="12" cy="7" r="6" fill="none" stroke="#757575" strokeWidth="1.300" />
              <path d="M7.700 11.200L0.700 18.200" stroke="#757575" strokeWidth="1.400" />
            </svg>
            <SearchInput type="search" aria-label="Suchen" placeholder={'"Benutzer" durchsuchen'} />
          </SearchBox>
        </AddressRow>

        <Panes>
          <Sidebar>
            <Tree>
              {tree.map((n, i) => (
                <TreeRow key={i} $level={n.level} $bg={n.bg} $gap={n.gap}>
                  {n.state ? (
                    <Toggle aria-label={n.state === 'open' ? 'Reduzieren' : 'Erweitern'}>
                      <Chevron open={n.state === 'open'} color={n.state === 'open' ? '#404040' : n.name === 'Benutzer' ? '#8599aa' : '#a6a6a6'} />
                    </Toggle>
                  ) : (
                    <ToggleGap />
                  )}
                  <TreeLink href="#">
                    <TreeIcon>{n.icon}</TreeIcon>
                    <ItemName>{n.name}</ItemName>
                  </TreeLink>
                </TreeRow>
              ))}
            </Tree>
            <ScrollBar>
              <ScrollArrow $h={30} aria-label="Nach oben scrollen"><ThinChevron up w={12} h={10} color="#606060" sw={2.8} /></ScrollArrow>
              <Track $part={137} />
              <Thumb />
              <Track $part={27} />
              <ScrollArrow $h={26} aria-label="Nach unten scrollen"><ThinChevron w={12} h={10} color="#606060" sw={2.8} /></ScrollArrow>
            </ScrollBar>
          </Sidebar>
          <Files>
            <FileTable>
              <thead>
                <tr>
                  <Head $w={461} $pad={28}>
                    Name
                    <SortMark><ThinChevron up w={12} h={7} color="#6d6d6d" sw={1} /></SortMark>
                  </Head>
                  <Head $w={243} $pad={9}>Änderungsdatum</Head>
                  <Head $w={202} $pad={9}>Typ</Head>
                  <Head $w={135} $pad={9}>Größe</Head>
                </tr>
              </thead>
              <tbody>
                {files.map((f) => (
                  <tr key={f.name}>
                    <NameCell><FileLink href="#"><Folder /><ItemName>{f.name}</ItemName></FileLink></NameCell>
                    <Cell>{f.date}</Cell>
                    <Cell>{f.type}</Cell>
                    <Cell />
                  </tr>
                ))}
              </tbody>
            </FileTable>
          </Files>
        </Panes>

        <StatusBar>
          <StatusText>2 Elemente</StatusText>
          <StatusRule />
          <ViewButtons>
            <ViewButton $on aria-label="Details"><DetailsIcon /></ViewButton>
            <ViewButton aria-label="Große Symbole"><PictureIcon /></ViewButton>
          </ViewButtons>
        </StatusBar>
        <TaskEdge>
          <EdgePart $w={72} $c="#111" />
          <EdgePart $w={516} $c="#c0c0c0" />
          <EdgePart $w={152} $c="#111" />
          <EdgePart $w={73} $c="#3a3a3a" />
          <EdgeEnd $w={2} $c="#777" />
        </TaskEdge>
      </Window>
    </>
  );
}
